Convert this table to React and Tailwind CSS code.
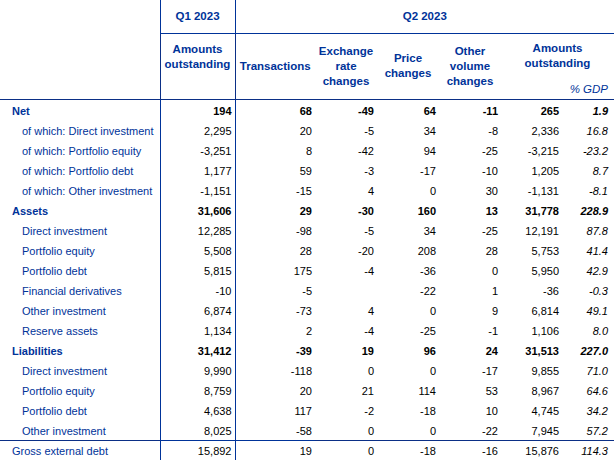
import * as React from "react"

const rows = [
  { label: "Net", kind: "head", v: ["194", "68", "-49", "64", "-11", "265", "1.9"] },
  { label: "of which: Direct investment", kind: "sub", v: ["2,295", "20", "-5", "34", "-8", "2,336", "16.8"] },
  { label: "of which: Portfolio equity", kind: "sub", v: ["-3,251", "8", "-42", "94", "-25", "-3,215", "-23.2"] },
  { label: "of which: Portfolio debt", kind: "sub", v: ["1,177", "59", "-3", "-17", "-10", "1,205", "8.7"] },
  { label: "of which: Other investment", kind: "sub", v: ["-1,151", "-15", "4", "0", "30", "-1,131", "-8.1"] },
  { label: "Assets", kind: "head", v: ["31,606", "29", "-30", "160", "13", "31,778", "228.9"] },
  { label: "Direct investment", kind: "sub", v: ["12,285", "-98", "-5", "34", "-25", "12,191", "87.8"] },
  { label: "Portfolio equity", kind: "sub", v: ["5,508", "28", "-20", "208", "28", "5,753", "41.4"] },
  { label: "Portfolio debt", kind: "sub", v: ["5,815", "175", "-4", "-36", "0", "5,950", "42.9"] },
  { label: "Financial derivatives", kind: "sub", v: ["-10", "-5", "", "-22", "1", "-36", "-0.3"] },
  { label: "Other investment", kind: "sub", v: ["6,874", "-73", "4", "0", "9", "6,814", "49.1"] },
  { label: "Reserve assets", kind: "sub", v: ["1,134", "2", "-4", "-25", "-1", "1,106", "8.0"] },
  { label: "Liabilities", kind: "head", v: ["31,412", "-39", "19", "96", "24", "31,513", "227.0"] },
  { label: "Direct investment", kind: "sub", v: ["9,990", "-118", "0", "0", "-17", "9,855", "71.0"] },
  { label: "Portfolio equity", kind: "sub", v: ["8,759", "20", "21", "114", "53", "8,967", "64.6"] },
  { label: "Portfolio debt", kind: "sub", v: ["4,638", "117", "-2", "-18", "10", "4,745", "34.2"] },
  { label: "Other investment", kind: "sub", v: ["8,025", "-58", "0", "0", "-22", "7,945", "57.2"] },
  { label: "Gross external debt", kind: "total", v: ["15,892", "19", "0", "-18", "-16", "15,876", "114.3"] },
]

const pads = ["pr-[3px]", "pr-[3px]", "pr-[3px]", "pr-[3px]", "pr-[3px]", "pr-[3px]", "pr-[6px]"]

export default function App() {
  return (
    <div className="w-[614px] h-[460px] bg-white overflow-hidden font-['Liberation_Sans',Arial,sans-serif] text-[11px]">
      <table className="w-[614px] table-fixed border-collapse">
        <colgroup>
          <col className="w-[160px]" />
          <col className="w-[75px]" />
          <col className="w-[80px]" />
          <col className="w-[62px]" />
          <col className="w-[62px]" />
          <col className="w-[62px]" />
          <col className="w-[61px]" />
          <col className="w-[52px]" />
        </colgroup>
        <thead className="text-[#003399] font-bold text-[11.5px] leading-[15px]">
          <tr className="h-[33px]">
            <th rowSpan={2} className="border-b border-[#0b2f86]"></th>
            <th className="border-l border-b border-[#003399] text-center align-middle">Q1 2023</th>
            <th colSpan={6} className="border-l border-b border-[#003399] text-center align-middle">Q2 2023</th>
          </tr>
          <tr className="h-[66px]">
            <th className="border-l border-b border-[#0b2f86] align-top pt-[8px] text-center">
              Amounts<br />outstanding
            </th>
            <th className="border-l border-b border-[#0b2f86] align-middle text-center">Transactions</th>
            <th className="border-b border-[#0b2f86] align-middle text-center">Exchange<br />rate<br />changes</th>
            <th className="border-b border-[#0b2f86] align-middle text-center">Price<br />changes</th>
            <th className="border-b border-[#0b2f86] align-middle text-center">Other<br />volume<br />changes</th>
            <th colSpan={2} className="border-b border-[#0b2f86] align-top pt-[7px]">
              <div className="text-center">Amounts<br />outstanding</div>
              <div className="mt-[11px] pr-[6px] text-right font-normal italic">% GDP</div>
            </th>
          </tr>
        </thead>
        <tbody>
          {rows.map((r, i) => {
            const bold = r.kind === "head"
            const top = r.kind === "total" ? "border-t border-[#0b2f86]" : ""
            return (
              <tr key={i} className={i === 0 ? "h-[21px]" : "h-[20px]"}>
                <td className={`${top} pt-[2px] text-[#003399] whitespace-nowrap ${r.kind === "sub" ? "pl-[22px]" : "pl-[12px]"} ${bold ? "font-bold" : ""}`}>
                  {r.label}
                </td>
                {r.v.map((v, j) => (
                  <td
                    key={j}
                    className={`${top} pt-[2px] text-right text-black ${pads[j]} ${bold ? "font-bold" : ""} ${j === 6 ? "italic" : ""} ${j < 2 ? "border-l border-[#003399]" : ""}`}
                  >
                    {v}
                  </td>
                ))}
              </tr>
            )
          })}
        </tbody>
      </table>
    </div>
  )
}
